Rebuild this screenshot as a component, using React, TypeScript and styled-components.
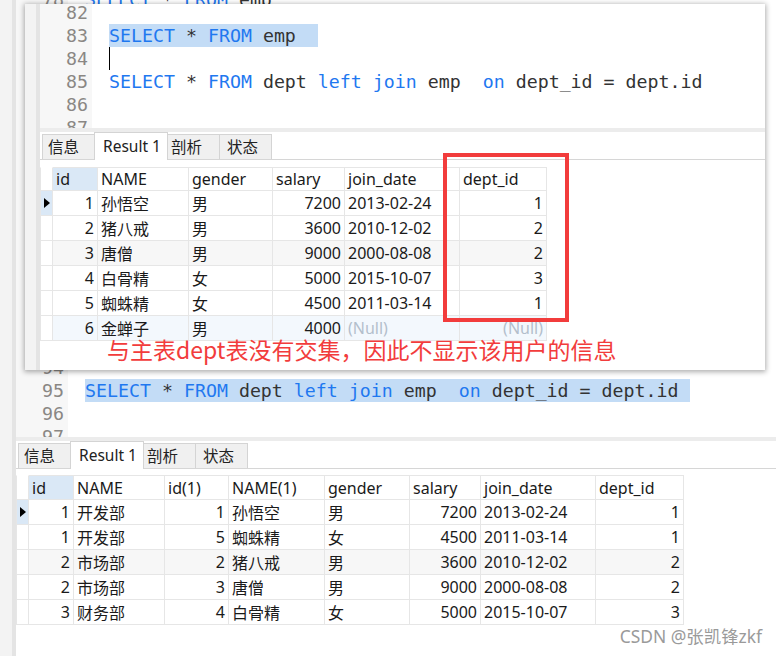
import React from "react";
import styled, { createGlobalStyle } from "styled-components";

const Global = createGlobalStyle`
  html, body { margin: 0; padding: 0; background: #ffffff; }
  body { width: 776px; height: 656px; overflow: hidden; }
  #root { width: 776px; height: 656px; }
`;

const UI_FONT = `"Noto Sans", "Noto Sans CJK SC", sans-serif`;
const CJK_FONT = `"Noto Sans CJK SC", "Noto Sans", sans-serif`;
const MONO = `"DejaVu Sans Mono", "Liberation Mono", monospace`;

const Page = styled.div`
  position: relative;
  width: 776px;
  height: 656px;
  display: flex;
  overflow: hidden;
  background: #ffffff;
`;

const SideStrip = styled.div<{ $w: number }>`
  flex: 0 0 ${(p) => p.$w}px;
  box-sizing: border-box;
  background: #f3f3f3;
  border-right: 4px solid #e4e4e4;
`;

const Main = styled.div`
  flex: 1;
  min-width: 0;
  display: flex;
  flex-direction: column;
  background: #ffffff;
`;

const EditorViewport = styled.div<{ $h: number }>`
  flex: none;
  height: ${(p) => p.$h}px;
  overflow: hidden;
`;

const EditorLines = styled.div<{ $offset: number }>`
  margin-top: ${(p) => p.$offset}px;
`;

const LineRow = styled.div`
  display: flex;
  height: 23px;
  line-height: 23px;
  font-family: ${MONO};
  font-size: 18.25px;
  white-space: pre;
`;

const LineNo = styled.div`
  flex: 0 0 52px;
  box-sizing: border-box;
  padding-right: 4px;
  text-align: right;
  background: #f7f7f7;
  color: #8a8784;
`;

const Code = styled.div`
  padding-left: 17px;
  color: #333333;
`;

const Kw = styled.span`
  color: #1f78f0;
`;

const Sel = styled.span`
  display: inline-block;
  height: 23px;
  vertical-align: top;
  background: #c3dcf6;
`;

const Caret = styled.span`
  display: inline-block;
  width: 1px;
  height: 23px;
  vertical-align: top;
  background: #000000;
`;

const Splitter = styled.div`
  flex: none;
  height: 4px;
  background: #ececec;
`;

const TabBar = styled.div`
  flex: none;
  display: flex;
  align-items: flex-end;
  height: 28px;
  box-sizing: border-box;
  padding-left: 2px;
  border-bottom: 1px solid #d6d6d6;
`;

const Tab = styled.div<{ $w: number; $pl: number; $active?: boolean }>`
  position: relative;
  width: ${(p) => p.$w}px;
  height: ${(p) => (p.$active ? 28 : 25)}px;
  margin-bottom: ${(p) => (p.$active ? -1 : 0)}px;
  margin-left: -1px;
  box-sizing: border-box;
  padding-left: ${(p) => p.$pl}px;
  border: 1px solid #d4d4d4;
  border-bottom: none;
  background: ${(p) => (p.$active ? "#ffffff" : "#f0f0f0")};
  z-index: ${(p) => (p.$active ? 1 : 0)};
  font-family: ${UI_FONT};
  font-size: 15.5px;
  color: #222222;
  white-space: nowrap;
  line-height: ${(p) => (p.$active ? 26 : 24)}px;
  &:first-child { margin-left: 0; }
`;

const TableArea = styled.div<{ $pt: number }>`
  padding-top: ${(p) => p.$pt}px;
  font-family: ${UI_FONT};
  font-size: 16px;
  color: #1a1a1a;
`;

const Row = styled.div<{ $cols: string; $h: number }>`
  display: grid;
  grid-template-columns: ${(p) => p.$cols};
  height: ${(p) => p.$h}px;
  width: max-content;
`;

const Cell = styled.div<{ $right?: boolean; $bg?: string; $head?: boolean; $null?: boolean }>`
  position: relative;
  box-sizing: border-box;
  border-right: 1px solid #e6e6e6;
  border-bottom: 1px solid #e6e6e6;
  border-top: ${(p) => (p.$head ? "1px solid #e6e6e6" : "none")};
  padding: 0 3px;
  white-space: nowrap;
  overflow: hidden;
  background: ${(p) => p.$bg || "transparent"};
  color: ${(p) => (p.$null ? "#b3bfcc" : "#1a1a1a")};
  display: flex;
  align-items: center;
  justify-content: ${(p) => (p.$right ? "flex-end" : "flex-start")};
`;

const IndicatorCell = styled.div<{ $bg?: string; $head?: boolean }>`
  box-sizing: border-box;
  border-right: 1px solid #e6e6e6;
  border-bottom: 1px solid #e6e6e6;
  border-left: 1px solid #e6e6e6;
  border-top: ${(p) => (p.$head ? "1px solid transparent" : "none")};
  background: ${(p) => p.$bg || "#ffffff"};
  display: flex;
  align-items: center;
  justify-content: center;
`;

const Arrow = styled.span`
  width: 0;
  height: 0;
  border-left: 6px solid #000000;
  border-top: 5px solid transparent;
  border-bottom: 5px solid transparent;
  margin-left: 1px;
`;

const Popup = styled.div`
  position: absolute;
  left: 25px;
  top: 4px;
  width: 740px;
  height: 366px;
  display: flex;
  overflow: hidden;
  background: #ffffff;
  box-shadow: 0 1px 5px 1px rgba(0, 0, 0, 0.32);
  z-index: 5;
`;

const RedBox = styled.div`
  position: absolute;
  left: 418px;
  top: 149px;
  width: 126px;
  height: 169px;
  box-sizing: border-box;
  border: 4px solid #f23c3c;
`;

const Annotation = styled.div`
  position: absolute;
  left: 82px;
  top: 331px;
  font-family: ${CJK_FONT};
  font-size: 23px;
  line-height: 28px;
  color: #f23c3c;
  white-space: nowrap;
`;

const Watermark = styled.div`
  position: absolute;
  right: 14px;
  top: 624px;
  font-family: ${UI_FONT};
  font-size: 17.4px;
  line-height: 24px;
  color: #9a9a9a;
  text-shadow: 0 0 2px #ffffff, 0 0 1px #ffffff;
  white-space: nowrap;
  z-index: 6;
`;

const KEYWORDS = new Set(["SELECT", "FROM", "left", "join", "on"]);

function Sql({ text }: { text: string }) {
  const parts = text.split(/(\s+)/);
  return (
    <>
      {parts.map((p, i) =>
        KEYWORDS.has(p) ? <Kw key={i}>{p}</Kw> : <React.Fragment key={i}>{p}</React.Fragment>
      )}
    </>
  );
}

type Line = { n: number; code?: string; sel?: boolean; selPad?: string; caret?: boolean };

function Editor({ lines, height, offset }: { lines: Line[]; height: number; offset: number }) {
  return (
    <EditorViewport $h={height}>
      <EditorLines $offset={offset}>
        {lines.map((l) => (
          <LineRow key={l.n}>
            <LineNo>{l.n}</LineNo>
            <Code>
              {l.caret && <Caret />}
              {l.code &&
                (l.sel ? (
                  <Sel>
                    <Sql text={l.code} />
                    {l.selPad}
                  </Sel>
                ) : (
                  <Sql text={l.code} />
                ))}
            </Code>
          </LineRow>
        ))}
      </EditorLines>
    </EditorViewport>
  );
}

function Tabs() {
  return (
    <TabBar>
      <Tab $w={53} $pl={5}>信息</Tab>
      <Tab $w={74} $pl={8} $active>
        Result 1
      </Tab>
      <Tab $w={53} $pl={3}>剖析</Tab>
      <Tab $w={53} $pl={7}>状态</Tab>
    </TabBar>
  );
}

type Col = { title: string; w: number; right?: boolean };
type Val = string | null;

function DataGrid({
  cols,
  rows,
  headH,
  rowH,
  pt,
  blueRow,
}: {
  cols: Col[];
  rows: Val[][];
  headH: number;
  rowH: number;
  pt: number;
  blueRow?: number;
}) {
  const template = "13px " + cols.map((c) => `${c.w}px`).join(" ");
  return (
    <TableArea $pt={pt}>
      <Row $cols={template} $h={headH}>
        <IndicatorCell $head />
        {cols.map((c, i) => (
          <Cell key={c.title} $head $bg={i === 0 ? "#dae8f6" : "#ffffff"}>
            {c.title}
          </Cell>
        ))}
      </Row>
      {rows.map((r, ri) => {
        const bg = ri === blueRow ? "#f3f8fd" : ri === 2 ? "#f7f7f7" : "#ffffff";
        return (
          <Row key={ri} $cols={template} $h={rowH}>
            <IndicatorCell $bg={ri === 0 ? "#dae8f6" : "#ffffff"}>{ri === 0 && <Arrow />}</IndicatorCell>
            {r.map((v, ci) => (
              <Cell key={ci} $right={cols[ci].right} $bg={bg} $null={v === null}>
                {v === null ? "(Null)" : v}
              </Cell>
            ))}
          </Row>
        );
      })}
    </TableArea>
  );
}

const bgLines: Line[] = Array.from({ length: 20 }, (_, i) => {
  const n = 78 + i;
  if (n === 78) return { n, code: "SELECT * FROM emp" };
  if (n === 95)
    return { n, code: "SELECT * FROM dept left join emp  on dept_id = dept.id", sel: true, selPad: " " };
  return { n };
});

const popLines: Line[] = [
  { n: 82 },
  { n: 83, code: "SELECT * FROM emp", sel: true, selPad: "  " },
  { n: 84, caret: true },
  { n: 85, code: "SELECT * FROM dept left join emp  on dept_id = dept.id" },
  { n: 86 },
  { n: 87 },
];

const empCols: Col[] = [
  { title: "id", w: 45, right: true },
  { title: "NAME", w: 91 },
  { title: "gender", w: 84 },
  { title: "salary", w: 72, right: true },
  { title: "join_date", w: 115 },
  { title: "dept_id", w: 87, right: true },
];

const empRows: Val[][] = [
  ["1", "孙悟空", "男", "7200", "2013-02-24", "1"],
  ["2", "猪八戒", "男", "3600", "2010-12-02", "2"],
  ["3", "唐僧", "男", "9000", "2000-08-08", "2"],
  ["4", "白骨精", "女", "5000", "2015-10-07", "3"],
  ["5", "蜘蛛精", "女", "4500", "2011-03-14", "1"],
  ["6", "金蝉子", "男", "4000", null, null],
];

const joinCols: Col[] = [
  { title: "id", w: 45, right: true },
  { title: "NAME", w: 91 },
  { title: "id(1)", w: 64, right: true },
  { title: "NAME(1)", w: 96 },
  { title: "gender", w: 85 },
  { title: "salary", w: 71, right: true },
  { title: "join_date", w: 115 },
  { title: "dept_id", w: 88, right: true },
];

const joinRows: Val[][] = [
  ["1", "开发部", "1", "孙悟空", "男", "7200", "2013-02-24", "1"],
  ["1", "开发部", "5", "蜘蛛精", "女", "4500", "2011-03-14", "1"],
  ["2", "市场部", "2", "猪八戒", "男", "3600", "2010-12-02", "2"],
  ["2", "市场部", "3", "唐僧", "男", "9000", "2000-08-08", "2"],
  ["3", "财务部", "4", "白骨精", "女", "5000", "2015-10-07", "3"],
];

export default function App() {
  return (
    <>
      <Global />
      <Page>
        <SideStrip $w={16} />
        <Main>
          <Editor lines={bgLines} height={437} offset={-12} />
          <Splitter />
          <Tabs />
          <DataGrid cols={joinCols} rows={joinRows} headH={25} rowH={25} pt={6} />
        </Main>

        <Popup>
          <SideStrip $w={15} />
          <Main>
            <Editor lines={popLines} height={124} offset={-3} />
            <Splitter />
            <Tabs />
            <DataGrid cols={empCols} rows={empRows} headH={24} rowH={25} pt={7} blueRow={5} />
          </Main>
          <RedBox />
          <Annotation>与主表dept表没有交集，因此不显示该用户的信息</Annotation>
        </Popup>

        <Watermark>CSDN @张凯锋zkf</Watermark>
      </Page>
    </>
  );
}
